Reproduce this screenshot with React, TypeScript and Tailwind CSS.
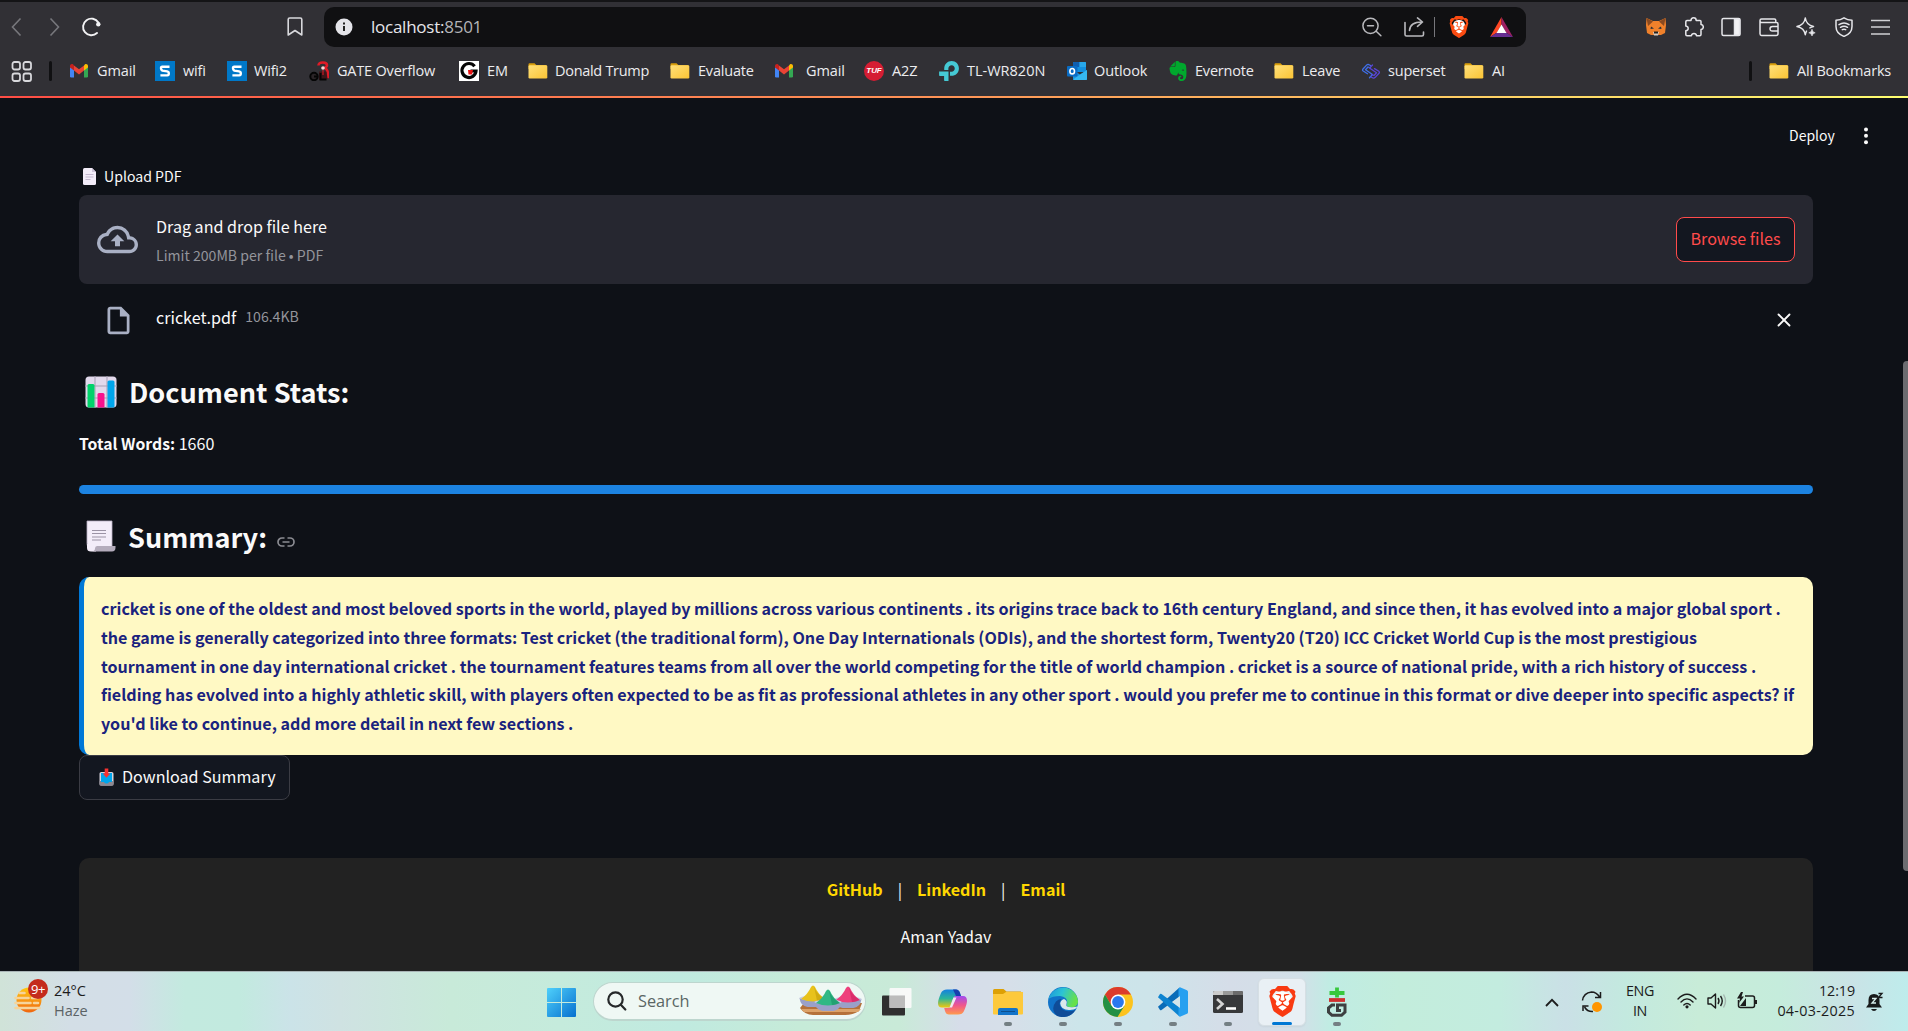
import type { ReactNode } from "react";
import { MdOutlineCloudUpload, MdOutlineInsertDriveFile } from "react-icons/md";
import { SiBrave, SiEvernote, SiTplink } from "react-icons/si";
import { X } from "lucide-react";

const Folder = () => (
  <svg width="20" height="20" viewBox="0 0 20 20">
    <defs>
      <linearGradient id="fold" x1="0" y1="0" x2="1" y2="1">
        <stop offset="0" stopColor="#ffe07a" />
        <stop offset="1" stopColor="#fbc434" />
      </linearGradient>
    </defs>
    <path d="M.5 3.200q0-1 1-1h5l1.800 1.800h10v4H.5z" fill="#d99e0b" />
    <rect x=".5" y="4.200" width="18.800" height="13.300" rx="1.200" fill="url(#fold)" />
  </svg>
);

const Gmail = () => (
  <svg width="20" height="20" viewBox="0 0 20 20">
    <path d="M0 6v9.200q0 1.300 1.300 1.300H4V8z" fill="#4285f4" />
    <path d="M18 6v9.200q0 1.300-1.300 1.300H14V8z" fill="#34a853" />
    <path d="M14 4.500v5l4-3V5c0-1.800-1.900-2.600-3.200-1.600z" fill="#fbbc04" />
    <path d="M4 9.500v-5l5 3.800 5-3.800v5l-5 3.900z" fill="#ea4335" />
    <path d="M0 5v1.500l4 3v-5l-.8-1C1.900 2.400 0 3.200 0 5z" fill="#c5221f" />
  </svg>
);

const SIcon = () => (
  <svg width="20" height="20" viewBox="0 0 20 20">
    <rect width="20" height="20" fill="#0078c8" />
    <path d="M14.500 5.800H7.200q-1.200 0-1.200 1.500T7.400 9.600l4.800.8q1.600.3 1.600 2.100t-1.500 1.900H5.400" fill="none" stroke="#fff" strokeWidth="2.400" />
  </svg>
);

const GateIcon = () => (
  <svg width="20" height="20" viewBox="0 0 20 20">
    <path d="M9.500 4.500q0-3 4.300-3 4.200 0 4.200 2.800 0 1.600-2.500 2.600 3.300 1.300 3.300 5.400v5" fill="none" stroke="#e01b27" strokeWidth="2.600" />
    <circle cx="14" cy="7" r="1.800" fill="#f5d9d9" />
    <path d="M10 10.500h7.500l1 7.500-8.500 1z" fill="#3c1518" />
    <circle cx="5" cy="15.500" r="3.700" fill="#2a2427" stroke="#050505" strokeWidth="2" />
    <path d="M5 15.500h3M11.500 12v6.500h6" stroke="#050505" strokeWidth="2" fill="none" />
    <path d="M14 9v5" stroke="#e01b27" />
  </svg>
);

const EmIcon = () => (
  <svg width="20" height="20" viewBox="0 0 20 20">
    <rect width="20" height="20" fill="#fff" />
    <path d="M15.600 5.300A7 7 0 1 0 17 10h-5.500" fill="none" stroke="#050505" strokeWidth="3.200" />
    <path d="M9 9h5l-1 4.500H9.500z" fill="#e81313" />
  </svg>
);

const TufIcon = () => (
  <span className="flex size-5 items-center justify-center rounded-full bg-[#d51d33] font-['Liberation_Sans'] text-[8px] leading-none font-bold italic text-white">
    TUF
  </span>
);

const Outlook = () => (
  <svg width="20" height="20" viewBox="0 0 20 20">
    <rect x="6" y="1" width="13" height="10" rx="1" fill="#1490df" />
    <path d="M6 2q0-1 1-1h5.500v5H6z" fill="#0f5fb0" />
    <path d="M12.500 1H18q1 0 1 1v4h-6.500z" fill="#28a8ea" />
    <path d="M6 9l7 4.500L20 9v9q0 1-1 1H7q-1 0-1-1z" fill="#1a93dd" />
    <path d="M6 18.500l8-5.500 6-4v9q0 1-1 1H7z" fill="#35b8f1" />
    <rect x="0" y="5" width="10.500" height="10.500" rx="1" fill="#0a6cc4" />
    <ellipse cx="5.200" cy="10.200" rx="2.300" ry="2.700" fill="none" stroke="#fff" strokeWidth="1.600" />
  </svg>
);

const Superset = () => (
  <svg width="20" height="20" viewBox="0 0 20 20" fill="none" strokeWidth="1.300" strokeLinecap="round" strokeLinejoin="round">
    <path d="M9.500 4.500L7.800 3.600q-1-.6-2 .3L2 8q-1 1.200.2 2l4.300 2.700M9.500 7L7 6 4.500 8.800l7 4.700-3 3.300" stroke="#3f6fe8" />
    <path d="M10 16l2 1q1 .5 2-.4l4-4.300q1-1.200-.2-2L13.500 7.600M10.500 13.500l2.500 1 2.500-2.800-7-4.700L11.500 4" stroke="#5a45d6" />
  </svg>
);

type Mark = { label: string; cls: string; icon: ReactNode };
const marks: Mark[] = [
  { label: "Gmail", cls: "w-[85px] gap-[7px] tracking-[-0.1px]", icon: <Gmail /> },
  { label: "wifi", cls: "w-[72px] gap-2 tracking-[-0.2px]", icon: <SIcon /> },
  { label: "Wifi2", cls: "w-[82px] gap-[7px] tracking-[-0.2px]", icon: <SIcon /> },
  { label: "GATE Overflow", cls: "w-[150px] gap-2 tracking-[-0.2px]", icon: <GateIcon /> },
  { label: "EM", cls: "w-[69px] gap-2 tracking-[-0.1px]", icon: <EmIcon /> },
  { label: "Donald Trump", cls: "w-[142px] gap-[7px] tracking-[-0.3px]", icon: <Folder /> },
  { label: "Evaluate", cls: "w-[105px] gap-2 tracking-[-0.2px]", icon: <Folder /> },
  { label: "Gmail", cls: "w-[89px] gap-[11px] tracking-[-0.1px]", icon: <Gmail /> },
  { label: "A2Z", cls: "w-[75px] gap-2 tracking-[-0.1px]", icon: <TufIcon /> },
  { label: "TL-WR820N", cls: "w-[128px] gap-2 tracking-[0px]", icon: <SiTplink size={20} color="#45c9d4" /> },
  { label: "Outlook", cls: "w-[101px] gap-[7px] tracking-[-0.1px]", icon: <Outlook /> },
  { label: "Evernote", cls: "w-[106px] gap-[7px] tracking-[-0.2px]", icon: <SiEvernote size={20} color="#00a82d" /> },
  { label: "Leave", cls: "w-[87px] gap-2 tracking-[-0.2px]", icon: <Folder /> },
  { label: "superset", cls: "w-[103px] gap-[7px] tracking-[-0.2px]", icon: <Superset /> },
  { label: "AI", cls: "w-[50px] gap-2 tracking-[-0.1px]", icon: <Folder /> },
];

const Lion = ({ size, color }: { size: number; color: string }) => (
  <span className="relative flex shrink-0 items-center justify-center">
    <span className="absolute h-[62%] w-[58%] rounded-[40%] bg-white" />
    <SiBrave size={size} color={color} className="relative" />
  </span>
);

const ToolIcon = ({ children }: { children: ReactNode }) => (
  <svg width="20" height="20" viewBox="0 0 20 20" fill="none" stroke="#e6e6ea" strokeWidth="1.500" strokeLinecap="round" strokeLinejoin="round">
    {children}
  </svg>
);

function Toolbar() {
  return (
    <div className="flex h-[50px] items-center">
      <svg className="ml-[11px]" width="11" height="20" viewBox="0 0 11 20" fill="none" stroke="#77777c" strokeWidth="1.600">
        <path d="M9.500 1.500L1.500 10l8 8.500" />
      </svg>
      <svg className="ml-[27px]" width="11" height="20" viewBox="0 0 11 20" fill="none" stroke="#77777c" strokeWidth="1.600">
        <path d="M1.500 1.500l8 8.500-8 8.500" />
      </svg>
      <svg className="ml-[21px]" width="21" height="20" viewBox="0 0 21 20" fill="none" stroke="#f2f2f4" strokeWidth="1.900">
        <path d="M17.400 5.500A8.300 8.300 0 1 0 16 16" strokeLinecap="round" />
        <circle cx="17.300" cy="7.300" r="2.200" fill="#f2f2f4" stroke="none" />
      </svg>
      <svg className="ml-[185px]" width="16" height="20" viewBox="0 0 16 20" fill="none" stroke="#d8d8dc" strokeWidth="1.600" strokeLinejoin="round">
        <path d="M1.200 2.500q0-1.500 1.500-1.500h10.600q1.500 0 1.500 1.500V18L8 13.500 1.200 18z" />
      </svg>
      <div className="ml-[21px] flex h-10 w-[1202px] shrink-0 items-center rounded-[10px] bg-[#101012] pl-[11px]">
        <svg width="18" height="18" viewBox="0 0 18 18">
          <circle cx="9" cy="9" r="8.500" fill="#e4e4e9" />
          <path d="M9 8v5M9 4.500v2" stroke="#222" strokeWidth="2" />
        </svg>
        <span className="ml-[18px] w-[991px] text-[17px] leading-5 tracking-[-0.25px] text-[#e6e6ea]">
          localhost:<span className="text-[#b4b4b8]">8501</span>
        </span>
        <svg width="20" height="20" viewBox="0 0 20 20" fill="none" stroke="#b9b9bd" strokeWidth="1.500" strokeLinecap="round">
          <circle cx="8.500" cy="8.800" r="7.600" />
          <path d="M14.200 14.300l4.700 4.500M5.500 8.800h6" />
        </svg>
        <svg className="ml-[22px]" width="21" height="20" viewBox="0 0 21 20" fill="none" stroke="#b9b9bd" strokeWidth="1.600" strokeLinecap="round" strokeLinejoin="round">
          <path d="M1 5.500v12q0 1.500 1.500 1.500H18q1.500 0 1.500-1.500V15" />
          <path d="M5.500 13.500q.5-8.500 12.500-8.500M13.500.900L18.500 5l-5 4.300" />
        </svg>
        <span className="ml-[9px] h-5 w-px bg-[#77777c]" />
        <span className="ml-[13px] flex">
          <Lion size={22} color="#fb4c12" />
        </span>
        <svg className="ml-[20px]" width="23" height="20" viewBox="0 0 23 20">
          <path d="M11.500 0L0 20l7-4.500 4.500-8z" fill="#ff4724" />
          <path d="M11.500 0L23 20l-7-4.500-4.500-8z" fill="#9e1f63" />
          <path d="M0 20h23l-7-4.500H7z" fill="#662d91" />
          <path d="M11.500 7.500l5 8.500h-10z" fill="#fff" />
        </svg>
      </div>
      <div className="ml-[120px] flex items-center gap-[17.500px]">
        <svg width="20" height="20" viewBox="0 0 20 20">
          <path d="M.5 1l6.500 3h6l6.500-3L20 8l-1 8-4 2H5l-4-2-1-8z" fill="#f0812b" />
          <path d="M.5 1L7 4.500 2 9zM19.500 1L13 4.500 18 9z" fill="#8a4a20" />
          <path d="M5 9.500l3 2-3.500.5zM15 9.500l-3 2 3.500.5z" fill="#26303a" />
          <path d="M7 15h6l-1 3.500H8z" fill="#d8cdc4" />
          <path d="M8 14.500h4v2H8z" fill="#222" />
        </svg>
        <ToolIcon>
          <path d="M7 3.500q0-2.700 2.600-2.700t2.600 2.700H16q1 0 1 1v3q2.300.3 2.300 2.500T17 12.500v5q0 1.200-1.200 1.200h-3.300q-.3-2.200-2.500-2.200t-2.600 2.200H3q-1.200 0-1.200-1.200v-3.700q2.400-.4 2.400-2.400T1.800 9V4.700q0-1.200 1.200-1.200z" />
        </ToolIcon>
        <ToolIcon>
          <rect x="1" y="1.500" width="18" height="17" rx="1.500" />
          <path d="M13.500 2h5v16h-5z" fill="#f2f2f4" />
        </ToolIcon>
        <ToolIcon>
          <path d="M2.500 2h12.800q1.500 0 1.500 1.500V5M1 3.500q0-1.500 1.500-1.500M1 3.500v13.300Q1 18.500 2.500 18.500h14.700q1.800 0 1.800-1.700V7q0-1.500-1.500-1.500H2.500Q1 5.500 1 3.700M19 9.500h-5.500q-2.500 0-2.500 2.300t2.500 2.200H19" />
        </ToolIcon>
        <ToolIcon>
          <path d="M9.300 1q1 7 8.200 8.500-2 .5-3.600 1.400M9.300 1Q8.300 8 1 9.500q7.300 1.500 8.300 8.200.4-2.200 1.200-3.600" />
          <path d="M16 12.500q.4 2.800 3.200 3.300Q16.400 16.300 16 19q-.4-2.700-3.200-3.200 2.800-.5 3.200-3.300z" fill="#e6e6ea" strokeWidth=".6" />
        </ToolIcon>
        <ToolIcon>
          <path d="M10 .8q3.500 2.200 8 2.500v6.200q0 7-8 9.900-8-2.900-8-9.900V3.300Q6.500 3 10 .8z" />
          <path d="M5 7.600q5-3.300 10 0M6.500 10.300q3.500-2.200 7 0M8.300 12.700q1.700-.9 3.400 0" />
        </ToolIcon>
        <svg width="20" height="20" viewBox="0 0 20 20" stroke="#d0d0d4" strokeWidth="1.700">
          <path d="M0 3.500h19M0 10h19M0 17h19" />
        </svg>
      </div>
    </div>
  );
}

function Bookmarks() {
  return (
    <div className="flex h-[44px] items-start pt-[9px] text-[14.500px] leading-5 text-[#ececef]">
      <svg className="ml-[11px]" width="22" height="22" viewBox="0 0 22 22" fill="none" stroke="#d8d8dc" strokeWidth="1.800">
        <rect x="1.500" y="1" width="7.500" height="7.500" rx="2" />
        <rect x="12.500" y="1" width="7.500" height="7.500" rx="2" />
        <rect x="1.500" y="12.500" width="7.500" height="7.500" rx="2" />
        <rect x="12.500" y="12.500" width="7.500" height="7.500" rx="2" />
      </svg>
      <span className="ml-4 h-5 w-[3px] rounded bg-[#101012]" />
      <div className="ml-[18px] flex w-[1680px]">
        {marks.map((m, i) => (
          <div key={i} className={`flex shrink-0 whitespace-nowrap ${m.cls}`}>
            <span className="flex size-5 shrink-0 items-center justify-center">{m.icon}</span>
            {m.label}
          </div>
        ))}
        <span className="ml-[235px] h-5 w-[3px] shrink-0 rounded bg-[#101012]" />
        <div className="ml-[17px] flex shrink-0 gap-2 whitespace-nowrap tracking-[-0.2px]">
          <Folder />
          All Bookmarks
        </div>
      </div>
    </div>
  );
}

const PageEmoji = () => (
  <svg width="13" height="17" viewBox="0 0 13 17">
    <path d="M0 1.500Q0 0 1.500 0H9l4 4v11.500q0 1.500-1.500 1.500h-10Q0 17 0 15.500z" fill="#f3edf9" />
    <path d="M9 0l4 4H9z" fill="#cfc5da" />
    <path d="M2.500 6.500h8M2.500 9h8M2.500 11.500h5" stroke="#c4b8d0" strokeWidth="1.100" />
  </svg>
);

const ChartEmoji = () => (
  <svg width="32" height="32" viewBox="0 0 32 32">
    <rect x=".5" y=".5" width="31" height="31" rx="3.500" fill="#e2d9ec" />
    <path d="M0 10h32M0 22h32M10 0v32M22 0v32" stroke="#a79fb3" />
    <path d="M2.500 9.500q0-1.500 1.500-1.500h4q1.500 0 1.500 1.500V31.500h-6q-1 0-1-1z" fill="#00d26a" />
    <path d="M12.500 18.500q0-1.500 1.500-1.500h4q1.500 0 1.500 1.500v13h-7z" fill="#f8128d" />
    <path d="M22.500 6q0-1.500 1.500-1.500h4q1.500 0 1.500 1.500v24.500q0 1-1 1h-6z" fill="#00a6ed" />
  </svg>
);

const ScrollEmoji = () => (
  <svg width="30" height="32" viewBox="0 0 30 32">
    <path d="M1 1h25v27H5q-4 0-4-5z" fill="#f3edf9" stroke="#b8aec4" strokeWidth=".8" />
    <path d="M1 24v4q0 3.500 4 3.500h5V26z" fill="#f3edf9" />
    <path d="M5 31.500q4 0 4-3 0-2.500 2-2.500h18.500v1.500q0 4-3.500 4z" fill="#b4acbc" />
    <path d="M6 10.500h14M6 13.500h14M6 17h14M6 20h9" stroke="#9b93a5" strokeWidth="1.200" />
  </svg>
);

const InboxEmoji = () => (
  <svg width="15" height="18" viewBox="0 0 15 18">
    <rect x=".5" y="4" width="14" height="13.500" rx="1.800" fill="#d8d4dc" />
    <path d="M.5 13h14v3.500q0 1.300-1.300 1.300H1.800q-1.300 0-1.300-1.300z" fill="#8d8892" />
    <path d="M2 5h11v9H10q-.5 1.500-2.500 1.500T5 14H2z" fill="#00a6ed" />
    <path d="M5.700.500h3.600v5h2L7.500 9.800 3.700 5.500h2z" fill="#f8312f" />
  </svg>
);

function AppPage() {
  return (
    <div className="relative h-[873px] overflow-hidden bg-[#0e1117] pl-[79px] font-['Noto_Sans_CJK_JP','Noto_Sans_CJK_SC',sans-serif] text-[#fafafa]">
      <div className="flex h-[62px] items-end pl-[1710px]">
        <span className="mb-[13px] w-[75px] text-[14px] leading-6">Deploy</span>
        <svg className="mb-[15px]" width="4" height="18" viewBox="0 0 4 18" fill="#fafafa">
          <circle cx="2" cy="2.500" r="2" />
          <circle cx="2" cy="8.800" r="2" />
          <circle cx="2" cy="15.200" r="2" />
        </svg>
      </div>
      <div className="w-[1734px]">
        <div className="flex h-[35px] items-start gap-2 pt-2 pl-1 text-[14.100px] leading-5">
          <PageEmoji />
          <span className="-mt-0.5">Upload PDF</span>
        </div>
        <div className="flex h-[89px] items-center rounded-lg bg-[#262730] pr-[18px] pl-[18px]">
          <MdOutlineCloudUpload size={41} color="#a9b0c4" />
          <div className="ml-[18px] grow">
            <div className="pt-px text-[16.100px] leading-[29px]">Drag and drop file here</div>
            <div className="text-[14.100px] leading-[28px] text-[#93949b]">Limit 200MB per file • PDF</div>
          </div>
          <div className="flex h-[45px] w-[119px] items-center justify-center rounded-lg border border-[#ff4b4b] bg-[#131720] pb-0.5 text-[16.100px] text-[#ff4b4b]">
            Browse files
          </div>
        </div>
        <div className="flex h-[72px] items-center pr-[18px] pl-[23px]">
          <MdOutlineInsertDriveFile size={33} color="#a9b0c4" />
          <span className="mb-[6px] ml-[21px] text-[16.100px]">cricket.pdf</span>
          <span className="mb-[6px] ml-[9px] grow text-[14.100px] text-[#93949b]">106.4KB</span>
          <X size={22} strokeWidth={2} />
        </div>
        <div className="flex h-[72px] items-center pl-[6px]">
          <ChartEmoji />
          <span className="ml-3 text-[27.100px] font-bold">Document Stats:</span>
        </div>
        <div className="h-[57px] pt-[3px] text-[16.100px] leading-6">
          <b className="text-[15.750px]">Total Words:</b> 1660
        </div>
        <div className="h-[9px] rounded-full bg-[#1c83e1]" />
        <div className="flex h-[83px] items-center pt-[4px] pl-[7px]">
          <div className="-mt-1">
            <ScrollEmoji />
          </div>
          <span className="ml-3 text-[27.100px] font-bold">Summary:</span>
          <svg className="mt-[8px] ml-[10px]" width="18" height="10" viewBox="0 0 18 10" fill="none" stroke="#8b8c92" strokeWidth="1.700">
            <path d="M7.500 1H5a4 4 0 0 0 0 8h2.500M10.500 1H13a4 4 0 0 1 0 8h-2.500M5.500 5h7" />
          </svg>
        </div>
        <div className="h-[178px] rounded-[10px] border-l-[5px] border-[#0078d7] bg-[#fff9c4] pt-[17px] pl-[17px] text-[16.100px] leading-[28.800px] font-bold whitespace-nowrap text-[#1a237e]">
          <div>cricket is one of the oldest and most beloved sports in the world, played by millions across various continents . its origins trace back to 16th century England, and since then, it has evolved into a major global sport .</div>
          <div>the game is generally categorized into three formats: Test cricket (the traditional form), One Day Internationals (ODIs), and the shortest form, Twenty20 (T20) ICC Cricket World Cup is the most prestigious</div>
          <div>tournament in one day international cricket . the tournament features teams from all over the world competing for the title of world champion . cricket is a source of national pride, with a rich history of success .</div>
          <div>fielding has evolved into a highly athletic skill, with players often expected to be as fit as professional athletes in any other sport . would you prefer me to continue in this format or dive deeper into specific aspects? if</div>
          <div>you'd like to continue, add more detail in next few sections .</div>
        </div>
        <div className="flex h-[45px] w-[211px] items-center rounded-lg border border-[#3b3c44] bg-[#131720] pb-0.5 pl-[19px] text-[16.100px]">
          <InboxEmoji />
          <span className="ml-2 whitespace-nowrap">Download Summary</span>
        </div>
        <div className="mt-[58px] h-[140px] rounded-[10px] bg-[#222222] pt-[17px] text-[16.100px] leading-[28px]">
          <div className="flex justify-center gap-[15px] font-bold text-[#ffd700]">
            <span>GitHub</span>
            <span className="font-normal text-[#fafafa]">|</span>
            <span>LinkedIn</span>
            <span className="font-normal text-[#fafafa]">|</span>
            <span>Email</span>
          </div>
          <div className="mt-[19px] text-center">Aman Yadav</div>
        </div>
      </div>
      <div className="absolute top-[263px] right-0 h-[510px] w-[5px] rounded-l bg-[#6c6c70]" />
    </div>
  );
}

const Bowl = ({ x, y, c, d }: { x: number; y: number; c: string; d: string }) => (
  <g transform={`translate(${x} ${y})`}>
    <path d="M-13.500 0h27q-1 8-8 9h-11q-7-1-8-9z" fill="#9aa0c8" />
    <ellipse cx="0" cy="0" rx="13.500" ry="2" fill="#c9cde6" />
    <path d="M-12 1Q-5-4-2-11q2-3 4 0 3 7 10 12-6 2.500-12 2.500T-12 1z" fill={c} />
    <path d="M1-12q2 8 11 13-4 2-8 2z" fill={d} opacity=".4" />
  </g>
);

const Running = ({ children }: { children: ReactNode }) => (
  <div className="flex h-full w-[55px] flex-col items-center">
    <div className="mt-[6px] flex h-[48px] w-[48px] items-center justify-center">{children}</div>
    <span className="-mt-[4px] h-1 w-2 rounded-full bg-[#747f83]" />
  </div>
);

function Taskbar() {
  return (
    <div className="flex h-[60px] items-start border-t border-[#a9b4b6] bg-[linear-gradient(90deg,#d0e3d8_0px,#d3dee6_70px,#d3dee8_130px,#c3eadf_185px,#c2eadf_240px,#cbe3e8_290px,#cfe2e2_340px,#c8ead9_450px,#c5ebdc_560px,#c0eae0_680px,#c6ebd8_800px,#c9ead8_900px,#d6dde9_960px,#d6dfe9_1010px,#cce5ea_1080px,#cde4ea_1150px,#d5dde8_1230px,#d2e0e8_1300px,#c0ece3_1330px,#c3eddc_1400px,#c3ecdf_1500px,#cae0e6_1565px,#c3e9df_1625px,#c8ecd8_1700px,#c5ecdc_1780px,#cae3e6_1850px,#beecec_1908px)] font-['Open_Sans','Noto_Sans',sans-serif] text-[#1c1c1c]">
      <div className="relative ml-[14px] flex w-[533px] shrink-0 pt-[9px]">
        <svg className="mt-[5px]" width="29" height="27" viewBox="0 0 29 27">
          <defs>
            <linearGradient id="sun" x1="0" y1="0" x2="0" y2="1">
              <stop offset="0" stopColor="#ffc814" />
              <stop offset="1" stopColor="#f0670f" />
            </linearGradient>
          </defs>
          <circle cx="15" cy="14" r="12.500" fill="url(#sun)" />
          <path d="M5.500 7h5M1.500 12h13M18 12h6M1.500 17h15M20 17h4M1.500 22h24" stroke="#f6d49a" strokeWidth="2.600" strokeLinecap="round" />
        </svg>
        <span className="absolute top-[7px] left-[14px] flex size-5 items-center justify-center rounded-full bg-[#c42b1c] text-[13px] leading-none tracking-[-0.5px] text-white">9+</span>
        <div className="ml-[11px] text-[14.500px] leading-[20px]">
          <div>24°C</div>
          <div className="text-[#5b6265]">Haze</div>
        </div>
      </div>
      <svg className="mt-4" width="29" height="29" viewBox="0 0 29 29">
        <defs>
          <linearGradient id="win" x1="0" y1="0" x2="1" y2="1">
            <stop offset="0" stopColor="#4fd0fb" />
            <stop offset="1" stopColor="#0670cf" />
          </linearGradient>
        </defs>
        <path d="M0 1q0-1 1-1h13v14H0zM15 0h13q1 0 1 1v13H15zM0 15h14v14H1q-1 0-1-1zM15 15h14v13q0 1-1 1H15z" fill="url(#win)" />
      </svg>
      <div className="mt-[10px] ml-[17px] flex h-[39px] w-[273px] items-center rounded-full border border-b-2 border-[#bdd6ce] bg-[#eff8f4] pl-[13px]">
        <svg width="20" height="20" viewBox="0 0 20 20" fill="none" stroke="#26292a" strokeWidth="2.200" strokeLinecap="round">
          <circle cx="8.500" cy="8.500" r="7.200" />
          <path d="M13.800 13.800l4.500 4.700" />
        </svg>
        <span className="ml-[11px] grow text-[16.300px] text-[#5a6664]">Search</span>
        <svg className="mr-0.5" width="64" height="32" viewBox="0 0 64 32">
          <path d="M5 18h58l-3 8q-6 4-14 4H14q-8 0-13-7z" fill="#b5713a" />
          <path d="M2 24h60l-3 3H5z" fill="#dca269" />
          <Bowl x={14} y={13} c="#e8c21b" d="#b08a00" />
          <Bowl x={49} y={14} c="#ee3f7c" d="#b81550" />
          <Bowl x={29} y={17} c="#30b884" d="#0f8058" />
        </svg>
      </div>
      <div className="ml-[3px] flex h-full">
        <div className="flex w-14 justify-center pt-[16px]">
          <svg width="30" height="28" viewBox="0 0 30 28">
            <rect x="0" y="7.500" width="23" height="20" rx="1" fill="#2f2f2f" />
            <rect x="7.500" y="0" width="22" height="20" rx="1" fill="#fafafa" opacity=".95" />
            <rect x="7.500" y="7.500" width="15.500" height="12.500" fill="#bcbcbc" />
          </svg>
        </div>
        <div className="flex w-[55px] justify-center pt-[17px]">
          <svg width="29" height="26" viewBox="0 0 29 26">
            <defs>
              <linearGradient id="cpa" x1="0" y1="0" x2="0" y2="1">
                <stop offset="0" stopColor="#1480e0" />
                <stop offset=".5" stopColor="#2bb59a" />
                <stop offset="1" stopColor="#f2c80c" />
              </linearGradient>
              <linearGradient id="cpb" x1="0" y1="0" x2="0" y2="1">
                <stop offset="0" stopColor="#a04bf0" />
                <stop offset=".5" stopColor="#f0568c" />
                <stop offset="1" stopColor="#ff9a4c" />
              </linearGradient>
            </defs>
            <path d="M9 .5h9q3 0 4 3.500l1 3h-4q-3 0-4 3l-2.500 8.500H4Q0 18.500 0 14q0-3 3-10Q4.500.500 9 .5z" fill="url(#cpa)" />
            <path d="M15 .5h3q3 0 4 3.500l1 3h-5z" fill="#173fae" />
            <path d="M20 25.500h-9q-3 0-4-3.500l-.8-3h3.500q3 0 4-3L16.500 7H25q4 0 4 5 0 3-3 10-1.500 3.500-6 3.500z" fill="url(#cpb)" />
            <path d="M15.500 8.500h3L14 18.500h-2.500z" fill="#f1e8f3" />
          </svg>
        </div>
        <Running>
          <svg width="30" height="28" viewBox="0 0 30 28">
            <path d="M0 2.500Q0 1 1.500 1h9l3 2.500H28v6H0z" fill="#dda005" />
            <path d="M0 6h10l3-2h17v21.500q0 1-1 1H1q-1 0-1-1z" fill="#fdc93c" />
            <path d="M5 27v-5q0-2 2-2h16q2 0 2 2v5z" fill="#1273c9" />
            <path d="M8 23.500h14" stroke="#0c4f8e" />
          </svg>
        </Running>
        <Running>
          <svg width="30" height="30" viewBox="0 0 30 30">
            <defs>
              <linearGradient id="edg" x1="0" y1="0" x2="1" y2=".3">
                <stop offset="0" stopColor="#1b93dc" />
                <stop offset=".5" stopColor="#2cc3d4" />
                <stop offset="1" stopColor="#67e04c" />
              </linearGradient>
            </defs>
            <circle cx="15" cy="15" r="15" fill="#1173c9" />
            <path d="M.5 12A15 15 0 0 1 30 14q.3 6-6.500 6.300-6.500 0-4.500-3.300 1.500-7-7-8Q4 9 .5 12z" fill="url(#edg)" />
            <path d="M9 29Q2 22 8 14.500q2-2.500 5.500-2.500-3.500 4-.5 8.500 4.500 6 14.500 2.500Q22 31.500 12 29.700z" fill="#0f4c98" />
            <path d="M18.500 17q1.200-3.500-2.500-5-3.500 1-3.800 4.500.8 7 9.800 6.500 4 0 6.500-1.800l.6-1.700q-3 1-5.600.800-6.500 0-5-3.300z" fill="#dce9ec" />
          </svg>
        </Running>
        <Running>
          <svg width="30" height="30" viewBox="0 0 30 30">
            <circle cx="15" cy="15" r="15" fill="#fcc31e" />
            <path d="M2 7.500A15 15 0 0 1 28 7.500H15L8.500 18.800z" fill="#dc3b2d" />
            <path d="M2 7.500A15 15 0 0 0 14.500 30L21.500 18.800 15 15 8.500 18.800z" fill="#229045" />
            <circle cx="15" cy="15" r="7.400" fill="#fff" />
            <circle cx="15" cy="15" r="5.900" fill="#2b78ee" />
          </svg>
        </Running>
        <Running>
          <svg width="30" height="30" viewBox="0 0 30 30">
            <path d="M0 19.800l21.500-19.300L22.500 9 3.500 23q-.8.500-1.500 0z" fill="#0a6cb8" />
            <path d="M0 10.200l21.500 19.300L22.500 21 3.500 7q-.8-.5-1.500 0z" fill="#0d83d0" />
            <path d="M22 .2L29 3.300q1 .5 1 1.500v20.400q0 1-1 1.500l-7 3.100q-1.500-.3-1.500-2V2.200q0-1.600 1.500-2z" fill="#27a0f0" />
            <path d="M22 9v12l-8-6z" fill="#d3e5ea" />
          </svg>
        </Running>
        <Running>
          <svg width="30" height="22" viewBox="0 0 30 22">
            <rect width="30" height="22" rx="1.500" fill="#37383a" />
            <path d="M0 1.500Q0 0 1.500 0H10v4H0z" fill="#cccccc" />
            <path d="M10 0h10v4H10z" fill="#999" />
            <path d="M20 0h8.500Q30 0 30 1.500V4H20z" fill="#6b6b6b" />
            <path d="M4 8l5.500 5L4 18" fill="none" stroke="#d5d5d5" strokeWidth="2.600" />
            <path d="M13 17.500h10" stroke="#fff" strokeWidth="2.600" />
          </svg>
        </Running>
        <div className="mt-[6px] ml-[3px] flex h-[48px] w-12 flex-col items-center rounded-md border border-[#d6dfe4] bg-[#e9f0f5] shadow-xs">
          <span className="mt-[7px] flex">
            <Lion size={31} color="#f93a12" />
          </span>
          <span className="mt-[5px] h-1 w-5 rounded-full bg-[#0078d4]" />
        </div>
        <div className="ml-[3px] flex">
          <Running>
            <svg width="20" height="30" viewBox="0 0 20 30">
              <path d="M2.500 6h15M10 .5v10" stroke="#38c83c" strokeWidth="3.800" />
              <path d="M2 13h16" stroke="#cf2f2f" strokeWidth="3.800" />
              <path d="M8 18H5l-3.500 3v4L5 28.300h9.500l3.500-3.300v-7h-7.500v5.500H14" fill="none" stroke="#3d3f41" strokeWidth="3" />
            </svg>
          </Running>
        </div>
      </div>
      <div className="ml-auto flex h-full w-[365px] items-start text-[14.300px] leading-5">
        <svg className="mt-[26px] ml-0.5" width="14" height="9" viewBox="0 0 14 9" fill="none" stroke="#1c1c1c" strokeWidth="1.800">
          <path d="M1 8l6-6.200L13 8" />
        </svg>
        <svg className="mt-[19px] ml-[22px]" width="22" height="22" viewBox="0 0 22 22" fill="none" stroke="#1c1c1c" strokeWidth="1.500">
          <path d="M1.500 9.500q1-7.500 9-8.500 5 0 8.500 5.500M19.500 1v5.500H14M12 20.500q-5.500.5-8.500-4.500M2 20v-5h5.500" />
          <circle cx="16" cy="16" r="5" fill="#ff9500" stroke="none" />
        </svg>
        <div className="mt-[9px] ml-[20px] w-[34px] text-center tracking-[-0.3px]">
          <div>ENG</div>
          <div>IN</div>
        </div>
        <svg className="mt-[21px] ml-5" width="20" height="16" viewBox="0 0 20 16" fill="none" stroke="#1c1c1c" strokeWidth="1.400" strokeLinecap="round">
          <path d="M1 6q9-9.500 18 0M4 9q6-6.200 12 0M6.800 12q3.200-3.200 6.400 0" />
          <circle cx="10" cy="13.800" r="1.600" fill="#1c1c1c" stroke="none" />
        </svg>
        <svg className="mt-[21px] ml-[10px]" width="20" height="16" viewBox="0 0 20 16" fill="none" stroke="#1c1c1c" strokeWidth="1.400" strokeLinejoin="round">
          <path d="M1 5h3L8.500 1v14L4 11H1zM11 5q2 3 0 6M13.500 3q3.500 5 0 10" />
          <path d="M16.500 1.500q4 6.500 0 13" stroke="#a3b5ae" />
        </svg>
        <svg className="mt-[20px] ml-[10px]" width="20" height="18" viewBox="0 0 20 18" fill="none" stroke="#1c1c1c" strokeWidth="1.500">
          <path d="M8 4h7.500q2 0 2 2v7.500q0 2-2 2h-12q-2 0-2-2V8" />
          <path d="M3 14l6-8v8zM4 0L0 6.500h3L2 11l5-6.500H4.500L6 0zM18 8h2v4h-2z" fill="#1c1c1c" stroke="none" />
        </svg>
        <div className="mt-[9px] ml-[16px] w-[82px] text-right whitespace-nowrap">
          <div className="tracking-[-0.1px]">12:19</div>
          <div className="tracking-[0.3px]">04-03-2025</div>
        </div>
        <svg className="mt-[20px] ml-[11px]" width="18" height="20" viewBox="0 0 18 20">
          <path d="M8 2q5.500 0 5.500 6v4l2.500 3.500H0L2.500 12V8Q2.500 2 8 2zM5 17h6q-1 2-3 2t-3-2z" fill="#17191a" />
          <path d="M6 6.500h4L6 11h4" stroke="#d6ecea" strokeWidth="1.300" fill="none" />
          <path d="M12.500 1.500h3.500l-3.500 4h4" stroke="#17191a" strokeWidth="1.300" fill="none" />
        </svg>
      </div>
    </div>
  );
}

export default function App() {
  return (
    <div className="flex h-[1031px] w-[1908px] flex-col overflow-hidden">
      <div className="h-[98px] bg-[#313035] font-['Open_Sans','Noto_Sans',sans-serif]">
        <div className="h-0.5 bg-[#141416]" />
        <Toolbar />
        <Bookmarks />
        <div className="h-0.5 bg-linear-to-r from-[#ff4d45] via-[#ff9457] to-[#ffff70]" />
      </div>
      <AppPage />
      <Taskbar />
    </div>
  );
}
